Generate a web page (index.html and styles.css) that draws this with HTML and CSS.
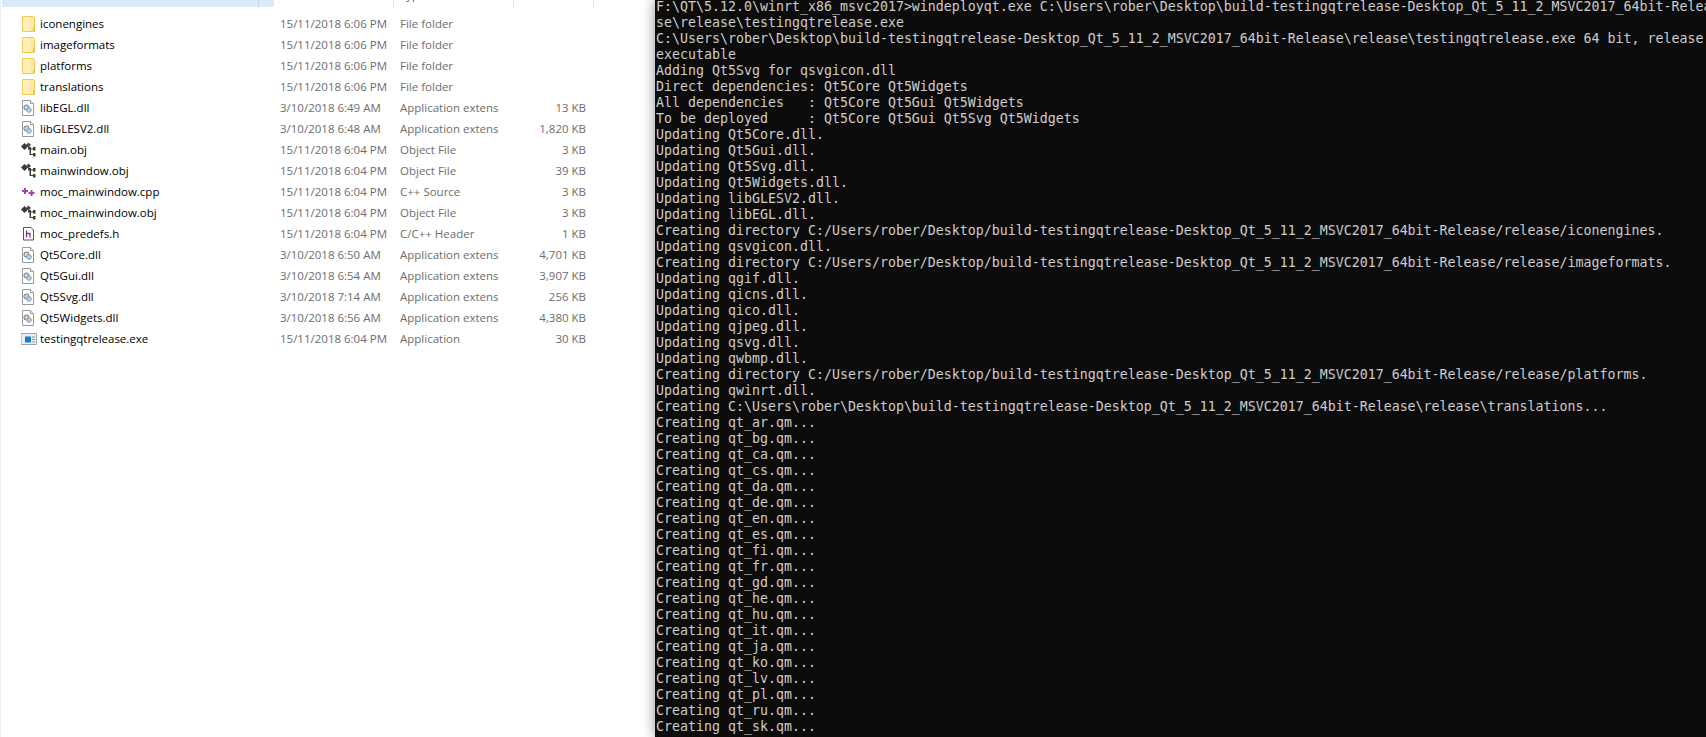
FILE: index.html
```html
<!DOCTYPE html>
<html lang="en">
<head>
<meta charset="utf-8">
<title>Explorer and console</title>
<link rel="stylesheet" href="styles.css">
</head>
<body>
<svg class="defs" width="0" height="0" aria-hidden="true">
  <symbol id="folder" viewBox="0 0 16 16">
    <path d="M1.500.5h11l1 1v14h-12z" fill="#fde9a4" stroke="#f2ca55"/>
    <path d="M2 1h6v14H2z" fill="#fff0bd"/>
    <path d="M12 11.500h1.500V15H12z" fill="#eebf3e"/>
  </symbol>
  <symbol id="dll" viewBox="0 0 16 16">
    <path d="M1.500.5h8l3 3v12h-11z" fill="#fff" stroke="#9a9a9a"/>
    <path d="M9.500.5v3h3" fill="#eee" stroke="#9a9a9a"/>
    <circle cx="5.500" cy="7.500" r="2.600" fill="#d0d0d0" stroke="#7c7c7c"/>
    <circle cx="8" cy="10" r="2.300" fill="#bcd3e6" stroke="#7f9db5"/>
  </symbol>
  <symbol id="obj" viewBox="0 0 16 16">
    <path d="M0 4.500L3.500 1 7 4.500 3.500 8z" fill="#3a3a3a"/>
    <path d="M5 3l2.500-2.500L10 3 7.500 5.500z" fill="#4a4a4a"/>
    <path d="M7 5h3v1.500h2V5h2.500v3.500H12V7.500h-2V12h2v-1h2.500v3.500H12V13H8.500V7.500H7z" fill="#3f3f3f"/>
  </symbol>
  <symbol id="cpp" viewBox="0 0 16 16">
    <path d="M1 6h2V4h2v2h2v2H5v2H3V8H1z" fill="#a0479f"/>
    <path d="M7.500 8h2V6h2v2h2v2h-2v2h-2v-2h-2z" fill="#a0479f"/>
  </symbol>
  <symbol id="hdr" viewBox="0 0 16 16">
    <path d="M2.500 1.500h7.500l2.500 2.500v10h-10z" fill="#fff" stroke="#555"/>
    <path d="M5.500 4.500v7M5.500 7.500h3.500v4" fill="none" stroke="#7d3a86" stroke-width="1.300"/>
  </symbol>
  <symbol id="exe" viewBox="0 0 16 16">
    <path d="M0 2.500h15.500v11H0z" fill="#e8eef4" stroke="#9aa5ae"/>
    <path d="M4 5.500h6v6H4z" fill="#1979ca"/>
    <path d="M11 6h3M11 8.500h3M11 11h3" stroke="#8a97a3"/>
  </symbol>
</svg>

<main class="desktop">
  <section class="explorer">
    <div class="header">
      <span class="head-cell head-name"></span>
      <span class="head-cell head-tail"></span>
      <span class="head-cell head-date"></span>
      <span class="head-cell head-type"><span class="type-stub">Type</span></span>
      <span class="head-cell head-size"></span>
    </div>
    <ul class="files">
      <li class="row"><svg class="ico"><use href="#folder"/></svg><span class="name">iconengines</span><span class="date">15/11/2018 6:06 PM</span><span class="type">File folder</span><span class="size"></span></li>
      <li class="row"><svg class="ico"><use href="#folder"/></svg><span class="name">imageformats</span><span class="date">15/11/2018 6:06 PM</span><span class="type">File folder</span><span class="size"></span></li>
      <li class="row"><svg class="ico"><use href="#folder"/></svg><span class="name">platforms</span><span class="date">15/11/2018 6:06 PM</span><span class="type">File folder</span><span class="size"></span></li>
      <li class="row"><svg class="ico"><use href="#folder"/></svg><span class="name">translations</span><span class="date">15/11/2018 6:06 PM</span><span class="type">File folder</span><span class="size"></span></li>
      <li class="row"><svg class="ico"><use href="#dll"/></svg><span class="name">libEGL.dll</span><span class="date">3/10/2018 6:49 AM</span><span class="type">Application extens</span><span class="size">13 KB</span></li>
      <li class="row"><svg class="ico"><use href="#dll"/></svg><span class="name">libGLESV2.dll</span><span class="date">3/10/2018 6:48 AM</span><span class="type">Application extens</span><span class="size">1,820 KB</span></li>
      <li class="row"><svg class="ico"><use href="#obj"/></svg><span class="name">main.obj</span><span class="date">15/11/2018 6:04 PM</span><span class="type">Object File</span><span class="size">3 KB</span></li>
      <li class="row"><svg class="ico"><use href="#obj"/></svg><span class="name">mainwindow.obj</span><span class="date">15/11/2018 6:04 PM</span><span class="type">Object File</span><span class="size">39 KB</span></li>
      <li class="row"><svg class="ico"><use href="#cpp"/></svg><span class="name">moc_mainwindow.cpp</span><span class="date">15/11/2018 6:04 PM</span><span class="type">C++ Source</span><span class="size">3 KB</span></li>
      <li class="row"><svg class="ico"><use href="#obj"/></svg><span class="name">moc_mainwindow.obj</span><span class="date">15/11/2018 6:04 PM</span><span class="type">Object File</span><span class="size">3 KB</span></li>
      <li class="row"><svg class="ico"><use href="#hdr"/></svg><span class="name">moc_predefs.h</span><span class="date">15/11/2018 6:04 PM</span><span class="type">C/C++ Header</span><span class="size">1 KB</span></li>
      <li class="row"><svg class="ico"><use href="#dll"/></svg><span class="name">Qt5Core.dll</span><span class="date">3/10/2018 6:50 AM</span><span class="type">Application extens</span><span class="size">4,701 KB</span></li>
      <li class="row"><svg class="ico"><use href="#dll"/></svg><span class="name">Qt5Gui.dll</span><span class="date">3/10/2018 6:54 AM</span><span class="type">Application extens</span><span class="size">3,907 KB</span></li>
      <li class="row"><svg class="ico"><use href="#dll"/></svg><span class="name">Qt5Svg.dll</span><span class="date">3/10/2018 7:14 AM</span><span class="type">Application extens</span><span class="size">256 KB</span></li>
      <li class="row"><svg class="ico"><use href="#dll"/></svg><span class="name">Qt5Widgets.dll</span><span class="date">3/10/2018 6:56 AM</span><span class="type">Application extens</span><span class="size">4,380 KB</span></li>
      <li class="row"><svg class="ico"><use href="#exe"/></svg><span class="name">testingqtrelease.exe</span><span class="date">15/11/2018 6:04 PM</span><span class="type">Application</span><span class="size">30 KB</span></li>
    </ul>
  </section>
  <pre class="console">F:\QT\5.12.0\winrt_x86_msvc2017&gt;windeployqt.exe C:\Users\rober\Desktop\build-testingqtrelease-Desktop_Qt_5_11_2_MSVC2017_64bit-Relea
se\release\testingqtrelease.exe
C:\Users\rober\Desktop\build-testingqtrelease-Desktop_Qt_5_11_2_MSVC2017_64bit-Release\release\testingqtrelease.exe 64 bit, release
executable
Adding Qt5Svg for qsvgicon.dll
Direct dependencies: Qt5Core Qt5Widgets
All dependencies   : Qt5Core Qt5Gui Qt5Widgets
To be deployed     : Qt5Core Qt5Gui Qt5Svg Qt5Widgets
Updating Qt5Core.dll.
Updating Qt5Gui.dll.
Updating Qt5Svg.dll.
Updating Qt5Widgets.dll.
Updating libGLESV2.dll.
Updating libEGL.dll.
Creating directory C:/Users/rober/Desktop/build-testingqtrelease-Desktop_Qt_5_11_2_MSVC2017_64bit-Release/release/iconengines.
Updating qsvgicon.dll.
Creating directory C:/Users/rober/Desktop/build-testingqtrelease-Desktop_Qt_5_11_2_MSVC2017_64bit-Release/release/imageformats.
Updating qgif.dll.
Updating qicns.dll.
Updating qico.dll.
Updating qjpeg.dll.
Updating qsvg.dll.
Updating qwbmp.dll.
Creating directory C:/Users/rober/Desktop/build-testingqtrelease-Desktop_Qt_5_11_2_MSVC2017_64bit-Release/release/platforms.
Updating qwinrt.dll.
Creating C:\Users\rober\Desktop\build-testingqtrelease-Desktop_Qt_5_11_2_MSVC2017_64bit-Release\release\translations...
Creating qt_ar.qm...
Creating qt_bg.qm...
Creating qt_ca.qm...
Creating qt_cs.qm...
Creating qt_da.qm...
Creating qt_de.qm...
Creating qt_en.qm...
Creating qt_es.qm...
Creating qt_fi.qm...
Creating qt_fr.qm...
Creating qt_gd.qm...
Creating qt_he.qm...
Creating qt_hu.qm...
Creating qt_it.qm...
Creating qt_ja.qm...
Creating qt_ko.qm...
Creating qt_lv.qm...
Creating qt_pl.qm...
Creating qt_ru.qm...
Creating qt_sk.qm...</pre>
</main>
</body>
</html>
```
FILE: styles.css
```css
html, body {
  margin: 0;
  height: 100%;
  overflow: hidden;
  background: #fff;
}
.defs { position: absolute; }
.desktop {
  display: flex;
  height: 737px;
  width: 1706px;
  overflow: hidden;
}
.explorer {
  width: 655px;
  flex: none;
  box-sizing: border-box;
  border-left: 1px solid #f0f0f0;
  font-family: "Open Sans", "Noto Sans", sans-serif;
  font-size: 11.5px;
  color: #000;
}
.header {
  display: flex;
  height: 7px;
  margin-left: 1px;
  overflow: hidden;
}
.head-cell {
  display: block;
  box-sizing: border-box;
  flex: none;
  height: 7px;
  border-right: 1px solid #e5e5e5;
}
.head-name {
  width: 257px;
  background: #d9ebf9;
  border-right-color: #c3d6e6;
}
.head-tail {
  width: 15px;
  background: #d9ebf9;
  border-right: 0;
}
.head-date { width: 120px; }
.head-type { width: 120px; overflow: hidden; }
.head-size { width: 80px; }
.type-stub {
  display: block;
  margin: -13px 0 0 6px;
  line-height: 16px;
  color: #4c607a;
}
.files {
  list-style: none;
  margin: 6px 0 0;
  padding: 0;
}
.row {
  display: flex;
  align-items: center;
  height: 21px;
}
.ico {
  width: 16px;
  height: 16px;
  margin-left: 20px;
  flex: none;
  overflow: visible;
}
.name {
  width: 240px;
  margin-left: 3px;
  flex: none;
}
.date {
  width: 120px;
  flex: none;
  color: #6d6d6d;
}
.type {
  width: 105px;
  flex: none;
  color: #6d6d6d;
}
.size {
  width: 81px;
  flex: none;
  text-align: right;
  color: #6d6d6d;
}
.console {
  flex: 1;
  margin: -1px 0 0;
  padding: 0 0 0 1px;
  background: #0c0c0c;
  color: #cccccc;
  font-family: "DejaVu Sans Mono", monospace;
  font-size: 13.29px;
  line-height: 16px;
  overflow: hidden;
  white-space: pre;
  box-shadow: -1px 0 12px rgba(0,0,0,.38);
}
```
